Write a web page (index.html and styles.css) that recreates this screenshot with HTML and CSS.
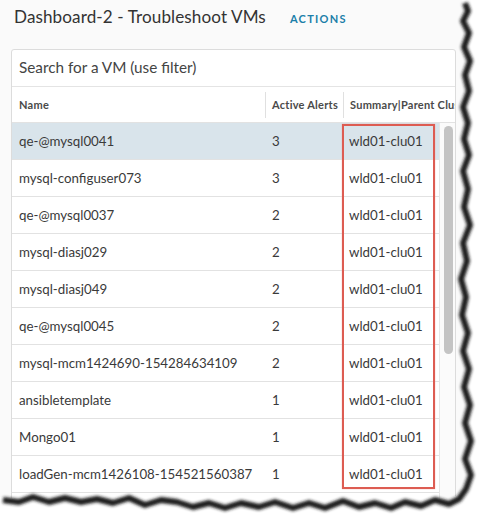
FILE: index.html
```html
<!DOCTYPE html>
<html>
<head>
<meta charset="utf-8">
<link rel="stylesheet" href="styles.css">
</head>
<body>
<div class="page">
  <div class="header">
    <h1 class="title">Dashboard-2 - Troubleshoot VMs</h1>
    <span class="actions">ACTIONS</span>
  </div>
  <div class="panel">
    <div class="search">Search for a VM (use filter)</div>
    <div class="row head">
      <div class="c c1">Name</div>
      <div class="c c2">Active Alerts</div>
      <div class="c c3">Summary|Parent Cluster</div>
    </div>
    <div class="grid">
      <div class="table">
        <div class="row sel"><div class="c c1">qe-@mysql0041</div><div class="c c2">3</div><div class="c c3">wld01-clu01</div></div>
        <div class="row"><div class="c c1">mysql-configuser073</div><div class="c c2">3</div><div class="c c3">wld01-clu01</div></div>
        <div class="row"><div class="c c1">qe-@mysql0037</div><div class="c c2">2</div><div class="c c3">wld01-clu01</div></div>
        <div class="row"><div class="c c1">mysql-diasj029</div><div class="c c2">2</div><div class="c c3">wld01-clu01</div></div>
        <div class="row"><div class="c c1">mysql-diasj049</div><div class="c c2">2</div><div class="c c3">wld01-clu01</div></div>
        <div class="row"><div class="c c1">qe-@mysql0045</div><div class="c c2">2</div><div class="c c3">wld01-clu01</div></div>
        <div class="row"><div class="c c1">mysql-mcm1424690-154284634109</div><div class="c c2">2</div><div class="c c3">wld01-clu01</div></div>
        <div class="row"><div class="c c1">ansibletemplate</div><div class="c c2">1</div><div class="c c3">wld01-clu01</div></div>
        <div class="row"><div class="c c1">Mongo01</div><div class="c c2">1</div><div class="c c3">wld01-clu01</div></div>
        <div class="row"><div class="c c1">loadGen-mcm1426108-154521560387</div><div class="c c2">1</div><div class="c c3">wld01-clu01</div></div>
        <div class="row"><div class="c c1">&nbsp;</div><div class="c c2"></div><div class="c c3"></div></div>
        <div class="highlight"></div>
      </div>
      <div class="track"><div class="thumb"></div></div>
    </div>
  </div>
</div>
<svg class="torn" width="480" height="517" viewBox="0 0 480 517">
  <defs>
    <filter id="sh" x="-10%" y="-10%" width="120%" height="120%">
      <feGaussianBlur stdDeviation="1.8"/>
    </filter>
  </defs>
  <path d="M462,0 L465,8 L460,18 L466,30 L461,44 L467,58 L462,72 L466,88 L460,104 L465,120 L461,136 L466,152 L460,168 L465,186 L461,204 L467,222 L460,240 L464,258 L458,276 L463,294 L459,312 L465,330 L460,348 L466,366 L461,384 L467,402 L462,420 L468,438 L462,456 L468,472 L463,486 L456,496 L446,501 L432,497 L418,503 L402,499 L388,505 L372,500 L356,504 L340,498 L322,505 L306,500 L290,505 L272,499 L256,504 L238,500 L222,505 L206,500 L190,504 L174,499 L158,497 L142,502 L126,495 L110,500 L94,496 L78,499 L62,495 L46,499 L30,494 L16,499 L0,497 L0,517 L480,517 L480,0 Z" fill="#fff"/>
  <path d="M462,0 L465,8 L460,18 L466,30 L461,44 L467,58 L462,72 L466,88 L460,104 L465,120 L461,136 L466,152 L460,168 L465,186 L461,204 L467,222 L460,240 L464,258 L458,276 L463,294 L459,312 L465,330 L460,348 L466,366 L461,384 L467,402 L462,420 L468,438 L462,456 L468,472 L463,486 L456,496 L446,501 L432,497 L418,503 L402,499 L388,505 L372,500 L356,504 L340,498 L322,505 L306,500 L290,505 L272,499 L256,504 L238,500 L222,505 L206,500 L190,504 L174,499 L158,497 L142,502 L126,495 L110,500 L94,496 L78,499 L62,495 L46,499 L30,494 L16,499 L0,497" fill="none" stroke="#1a1a1a" stroke-width="6" stroke-linejoin="round" transform="translate(3,3)" filter="url(#sh)"/>
</svg>
</body>
</html>
```
FILE: styles.css
```css
* { box-sizing: border-box; }
html, body { margin: 0; padding: 0; background: #fff; }
body { width: 480px; height: 517px; overflow: hidden; position: relative; font-family: Lato, "Open Sans", sans-serif; color: #3a3a3a; }
.page { width: 480px; height: 517px; background: #fafafa; padding: 0 0 0 11px; overflow: hidden; }
.header { display: flex; align-items: baseline; height: 38px; padding: 6px 0 0 3px; }
.title { margin: 0; font-size: 17.1px; font-weight: 400; color: #333; letter-spacing: 0.1px; }
.actions { margin-left: 24px; font-size: 11px; font-weight: 700; letter-spacing: 1.3px; color: #1b7fa9; }
.panel { margin-top: 11px; width: 445px; height: 470px; background: #fff; border: 1px solid #dcdcdc; border-radius: 3px; overflow: hidden; }
.search { height: 37px; padding: 8px 0 0 7px; font-size: 15.3px; color: #444; border-bottom: 1px solid #e4e4e4; }
.grid { display: flex; }
.table { width: 427px; position: relative; }
.row { display: flex; height: 37px; align-items: center; border-bottom: 1px solid #e2e2e2; font-size: 13.3px; white-space: nowrap; }
.row.head { height: 36px; font-size: 11px; font-weight: 700; letter-spacing: 0.25px; color: #4a4a4a; border-bottom: 1px solid #e2e2e2; }
.row.sel { background: #d9e4eb; }
.c { overflow: hidden; }
.c1 { width: 253px; padding-left: 7px; }
.c2 { width: 78px; padding-left: 7px; }
.c3 { width: 96px; padding-left: 6px; }
.head .c { display: flex; align-items: center; height: 26px; }
.head .c2 { padding-left: 6px; }
.head .c3 { flex: 1; }
.head .c2, .head .c3 { border-left: 1px solid #e0e0e0; }
.highlight { position: absolute; left: 330px; top: 1px; width: 93px; height: 365px; border: 2px solid #dd5c52; box-shadow: 0 0 1px #f19c96; }
.track { width: 17px; border-left: 1px solid #e6e6e6; padding: 3px 0 0 4px; background: #fbfbfb; }
.thumb { width: 9px; height: 228px; background: #c4c4c4; border-radius: 5px; }
.torn { position: absolute; left: 0; top: 0; pointer-events: none; }
```
